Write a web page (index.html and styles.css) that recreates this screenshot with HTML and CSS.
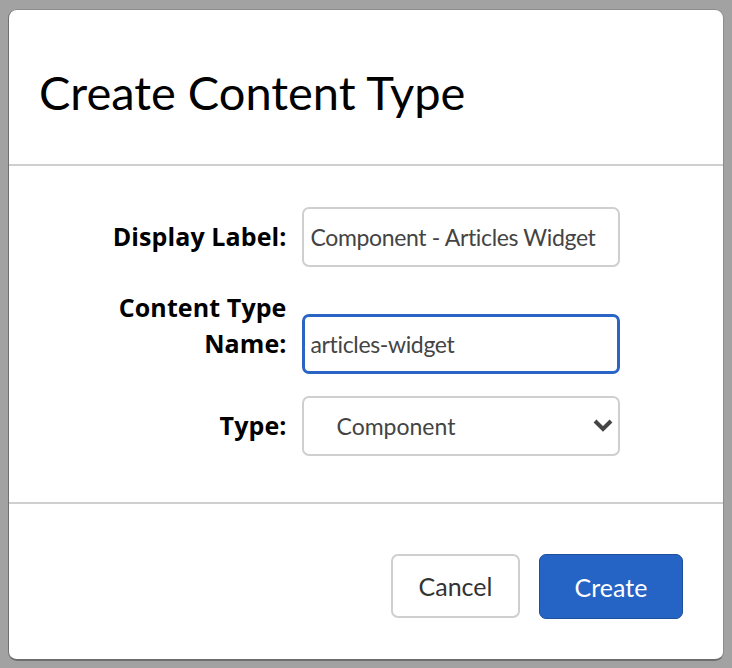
FILE: index.html
```html
<!DOCTYPE html>
<html>
<head>
<meta charset="utf-8">
<link rel="stylesheet" href="styles.css">
</head>
<body>
<div class="dialog">
  <div class="dialog-header">
    <h1 class="title">Create Content Type</h1>
  </div>
  <div class="dialog-body">
    <form class="form">
      <label class="label" for="dl">Display Label:</label>
      <input class="field" id="dl" type="text" value="Component - Articles Widget">
      <label class="label" for="ctn">Content Type Name:</label>
      <input class="field field-focus" id="ctn" type="text" value="articles-widget">
      <label class="label" for="ty">Type:</label>
      <div class="select-wrap">
        <select class="field select" id="ty">
          <option>Component</option>
        </select>
        <svg class="chevron" width="20" height="14" viewBox="0 0 20 14"><polyline points="2,3 10,11 18,3" fill="none" stroke="#454545" stroke-width="4" stroke-linejoin="miter" stroke-linecap="butt"/></svg>
      </div>
    </form>
  </div>
  <div class="dialog-footer">
    <button class="btn btn-cancel" type="button">Cancel</button>
    <button class="btn btn-create" type="button">Create</button>
  </div>
</div>
</body>
</html>
```
FILE: styles.css
```css
html, body {
  margin: 0;
  height: 100%;
}
body {
  background: #a2a2a2;
  padding: 9px 8px 0 8px;
  box-sizing: border-box;
  font-family: Lato, "Open Sans", sans-serif;
}
.dialog {
  width: 716px;
  height: 652px;
  box-sizing: border-box;
  background: #fff;
  border: 1px solid #8c8c8c;
  border-left-color: #707070;
  border-bottom: 2px solid #6e6e6e;
  border-radius: 9px;
  display: flex;
  flex-direction: column;
}
.dialog-header {
  height: 156px;
  box-sizing: border-box;
  border-bottom: 2px solid #cfcfcf;
  display: flex;
  align-items: center;
  padding: 10px 0 0 30px;
}
.title {
  margin: 0;
  font-weight: 400;
  font-size: 47px;
  color: #000;
  letter-spacing: 0;
}
.dialog-body {
  height: 338px;
  box-sizing: border-box;
  border-bottom: 2px solid #cfcfcf;
  padding-top: 41px;
}
.form {
  display: grid;
  grid-template-columns: 174px 318px;
  column-gap: 15px;
  row-gap: 22px;
  justify-content: center;
  align-items: last baseline;
}
.label {
  text-align: right;
  font-family: "Open Sans", Lato, sans-serif;
  font-weight: 700;
  font-size: 25px;
  line-height: 36px;
  color: #000;
  letter-spacing: 0.1px;
}
.field {
  height: 60px;
  box-sizing: border-box;
  border: 2px solid #cfcfcf;
  border-radius: 7px;
  padding: 0 0 0 7px;
  font-family: Lato, "Open Sans", sans-serif;
  font-size: 23px;
  letter-spacing: -0.35px;
  color: #444;
  background: #fff;
  width: 318px;
  outline: none;
}
.field-focus {
  border: 3px solid #2a64c5;
  padding-left: 6px;
}
.select-wrap {
  position: relative;
}
.select {
  appearance: none;
  -webkit-appearance: none;
  padding-left: 33px;
  letter-spacing: 0;
  display: block;
}
.chevron {
  position: absolute;
  right: 7px;
  top: 22px;
  pointer-events: none;
}
.dialog-footer {
  flex: 1;
  display: flex;
  justify-content: flex-end;
  align-items: flex-start;
  gap: 19px;
  padding: 50px 40px 0 0;
}
.btn {
  font-family: Lato, "Open Sans", sans-serif;
  font-size: 25px;
  border-radius: 7px;
  cursor: pointer;
}
.btn-cancel {
  width: 129px;
  height: 64px;
  background: #fff;
  border: 2px solid #cfcfcf;
  color: #333;
}
.btn-create {
  width: 144px;
  height: 65px;
  background: #2563c4;
  border: 1px solid #1d4f9c;
  color: #fff;
}
```
